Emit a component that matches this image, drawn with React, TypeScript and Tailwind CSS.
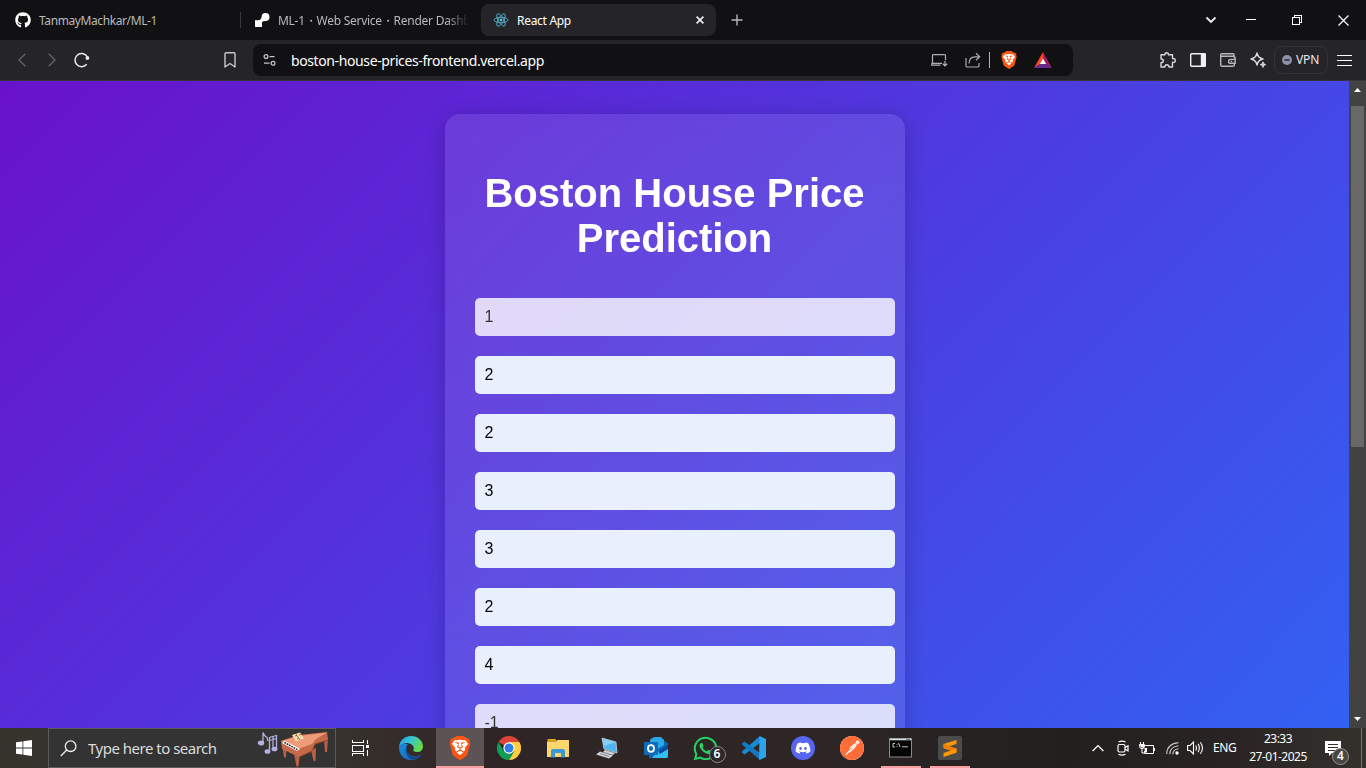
import React from "react";
import { FaGithub, FaWhatsapp, FaDiscord } from "react-icons/fa";
import { SiBrave, SiPostman } from "react-icons/si";

const ui = "font-['Noto_Sans','Open_Sans',sans-serif]";

function ReactMark() {
  return (
    <svg width="16" height="16" viewBox="-12 -12 24 24" fill="none" stroke="#61dafb" strokeWidth="1.2" className="opacity-85">
      <circle r="2.1" fill="#61dafb" stroke="none" />
      <ellipse rx="10.5" ry="4.1" />
      <ellipse rx="10.5" ry="4.1" transform="rotate(60)" />
      <ellipse rx="10.5" ry="4.1" transform="rotate(120)" />
    </svg>
  );
}

function BraveMark({ size }: { size: number }) {
  return (
    <svg width={size} height={size} viewBox="0 0 24 24">
      <path d="M4 4 L7 1.5 H17 L20 4 L21 7 L18.7 17 L12 22.5 L5.3 17 L3 7Z" fill="#fff" />
      <SiBrave size={24} color="#fb5413" />
    </svg>
  );
}

function TabStrip() {
  return (
    <div className="flex h-10 shrink-0 items-center bg-[#111113] text-[12px] text-[#b9b9bb]">
      <div className="ml-[15px] flex w-[225px] items-center">
        <FaGithub size={16} color="#fff" />
        <span className="ml-2 pt-px whitespace-nowrap tracking-[-0.4px]">TanmayMachkar/ML-1</span>
      </div>
      <div className="h-4 w-px bg-[#3a3a3d]" />
      <div className="ml-[14px] flex w-[214px] items-center">
        <svg width="15" height="14" viewBox="0 0 15 14" fill="#fff">
          <path d="M0 7.2 H3 Q6.3 7 6.6 4 A4 4 0 1 1 10.6 8 Q8 8 7 9 V14 H0Z" />
        </svg>
        <span className="ml-2 w-[192px] overflow-hidden pt-px whitespace-nowrap tracking-[-0.26px] [mask-image:linear-gradient(90deg,#000_88%,transparent)]">
          ML-1・Web Service・Render Dashb
        </span>
      </div>
      <div className="ml-3 flex h-8 w-[235px] items-center rounded-lg bg-[#252529] text-white">
        <span className="ml-3"><ReactMark /></span>
        <span className="ml-2 flex-1 pt-px tracking-[-0.3px]">React App</span>
        <svg width="8" height="8" viewBox="0 0 8 8" className="mr-3" stroke="#eee" strokeWidth="1.7"><path d="M.6.6 7.4 7.4M7.4.6.6 7.4" /></svg>
      </div>
      <svg width="12" height="12" viewBox="0 0 12 12" className="ml-[15px]" stroke="#b8b8ba" strokeWidth="1.4"><path d="M6 .5V11.5M.5 6H11.5" /></svg>
      <div className="flex-1" />
      <svg width="12" height="8" viewBox="0 0 12 8" fill="none" stroke="#eee" strokeWidth="1.9"><path d="M1.5 1.5 6 6 10.5 1.5" /></svg>
      <svg width="10" height="10" viewBox="0 0 10 10" className="ml-[29px]" stroke="#fff" shapeRendering="crispEdges"><path d="M0 4.5H10" /></svg>
      <svg width="10" height="10" viewBox="0 0 10 10" className="ml-[36px]" fill="none" stroke="#fff" shapeRendering="crispEdges"><path d="M.5 2.5H7.5V9.5H.5ZM2.5 2.5V.5H9.5V7.5H7.5" /></svg>
      <svg width="11" height="11" viewBox="0 0 11 11" className="mr-[17px] ml-[36px]" stroke="#fff" strokeWidth="1.2"><path d="M.5.5 10.5 10.5M10.5.5.5 10.5" /></svg>
    </div>
  );
}

function Toolbar() {
  return (
    <div className="flex h-[41px] shrink-0 items-center border-b border-[#35353b] bg-[#252529]">
      <svg width="8" height="14" viewBox="0 0 8 14" className="ml-[18px]" fill="none" stroke="#66666a" strokeWidth="1.3"><path d="M7.3.7 1 7 7.3 13.3" /></svg>
      <svg width="8" height="14" viewBox="0 0 8 14" className="ml-[22px]" fill="none" stroke="#66666a" strokeWidth="1.3"><path d="M.7.7 7 7 .7 13.3" /></svg>
      <svg width="16" height="16" viewBox="0 0 16 16" className="ml-[18px]" fill="none" stroke="#e8e8ea" strokeWidth="1.5"><path d="M13.6 5.2A6.6 6.6 0 1 0 12.7 12.3" /><circle cx="13.4" cy="6" r="1.9" fill="#e8e8ea" stroke="none" /></svg>
      <svg width="12" height="16" viewBox="0 0 12 16" className="ml-[134px]" fill="none" stroke="#c6c6ca" strokeWidth="1.4" strokeLinejoin="round"><path d="M1 1.7Q1 .8 2 .8H10Q11 .8 11 1.7V15L6 11.5 1 15Z" /></svg>

      <div className="ml-[17px] flex h-8 w-[820px] items-center rounded-lg bg-[#111113]">
        <svg width="13" height="12" viewBox="0 0 13 12" className="ml-[10px]" fill="none" stroke="#c3c3c6" strokeWidth="1.3"><circle cx="3" cy="2.6" r="1.9" /><path d="M6.5 2.6H11.5M1 9.2H6.5" /><circle cx="10" cy="9.2" r="1.9" /></svg>
        <span className="ml-[15px] flex-1 text-[14px] tracking-[-0.39px] text-white">boston-house-prices-frontend.vercel.app</span>
        <svg width="17" height="13" viewBox="0 0 17 13" fill="none" stroke="#b0b0b4" strokeWidth="1.2"><path d="M14.5 6V1.5Q14.5.7 13.7.7H2.3Q1.5.7 1.5 1.5V9M.5 9.3H11M.7 9.5V11.2H9.5M14 6.7V11.7M11.8 9.7 14 11.8 16.2 9.7" /></svg>
        <svg width="16" height="16" viewBox="0 0 16 16" className="ml-[17px]" fill="none" stroke="#a9a9ad" strokeWidth="1.2"><path d="M1 6V13.7Q1 15 2.3 15H12.7Q14 15 14 13.7V11M4 11.5Q4.2 4.8 10 4.8H14.5M11 1.2 14.7 4.8 11 8.3" /></svg>
        <div className="ml-[8px] h-4 w-px bg-[#b5b5b7]" />
        <span className="ml-[10px]"><BraveMark size={18} /></span>
        <svg width="18" height="16" viewBox="0 0 18 16" className="mr-[21px] ml-[16px]"><path d="M9 0 0 16 6 12 9 6.5Z" fill="#ff4724" /><path d="M9 0 18 16 12 12 9 6.5Z" fill="#9e1f63" /><path d="M0 16H18L12 12H6Z" fill="#662d91" /><path d="M9 6.5 12.2 12H5.8Z" fill="#fff" /></svg>
      </div>
      <div className="flex-1" />
      <svg width="16" height="16" viewBox="0 0 16 16" fill="none" stroke="#d9d9dc" strokeWidth="1.4" strokeLinejoin="round"><path d="M1 2.7H5Q4.8.7 6.6.7 8.5.7 8.4 2.7H12.5V6.5Q15.3 6.3 15.3 8.5 15.3 10.7 12.5 10.3V15H9Q8.8 12.8 6.8 12.8 5 12.8 4.8 15H1V10.7Q3.4 10.6 3.4 8.8 3.4 7.2 1 7Z" /></svg>
      <svg width="16" height="14" viewBox="0 0 16 14" className="ml-[14px]" fill="none" stroke="#f0f0f2" strokeWidth="1.4"><rect x=".7" y=".7" width="14.6" height="12.6" rx="1" /><path d="M11.5 1H15V13H11.5Z" fill="#f0f0f2" /></svg>
      <svg width="16" height="14" viewBox="0 0 16 14" className="ml-[14px]" fill="none" stroke="#b7b7bb" strokeWidth="1.4"><path d="M14 3.7V1.6Q14 .7 13 .7H2Q.7.7.7 2V11.5Q.7 13.3 2.5 13.3H13Q14.3 13.3 14.3 12V11M.7 3.3H13Q15.2 3.3 15.2 5.5V10.3H10.5Q8.6 10.3 8.6 8.4 8.6 6.4 10.5 6.4H15" /><path d="M10.7 8.4H12.2" /></svg>
      <svg width="16" height="16" viewBox="0 0 16 16" className="ml-[14px]" fill="none" stroke="#d9d9dc" strokeWidth="1.4" strokeLinejoin="round"><path d="M7 1Q8 6 13 7 8 8 7 13 6 8 1 7 6 6 7 1Z" /><path d="M13 9.8Q13.2 12.4 15.8 12.6 13.2 12.8 13 15.5 12.8 12.8 10.2 12.6 12.8 12.4 13 9.8Z" fill="#d9d9dc" strokeWidth=".9" /></svg>
      <div className="ml-2 flex h-[28px] w-[54px] items-center rounded-lg border border-[#323238] text-[12px] text-[#e8e8ea]">
        <svg width="10" height="10" viewBox="0 0 10 10" className="ml-[7px]"><circle cx="5" cy="5" r="5" fill="#8f90aa" /><path d="M2.4 5H7.6" stroke="#252529" strokeWidth="1.4" /></svg>
        <span className="ml-1 tracking-[-0.15px]">VPN</span>
      </div>
      <svg width="15" height="12" viewBox="0 0 15 12" className="mr-[14px] ml-[9px]" stroke="#fff" strokeWidth="1" shapeRendering="crispEdges"><path d="M0 1.5H15M0 6.5H15M0 11.5H15" /></svg>
    </div>
  );
}

const fields = [
  { value: "1", filled: false },
  { value: "2", filled: true },
  { value: "2", filled: true },
  { value: "3", filled: true },
  { value: "3", filled: true },
  { value: "2", filled: true },
  { value: "4", filled: true },
  { value: "-1", filled: false },
];

function Page() {
  return (
    <div className="flex min-h-0 flex-1">
      <main className="flex h-full flex-1 items-start justify-center overflow-hidden bg-[linear-gradient(135deg,#6a11cb_0%,#2575fc_100%)] bg-[length:1349px_1163px] bg-[position:0_-17px] pt-[33px] font-['Liberation_Sans',Arial,sans-serif]">
        <section className="h-[1063px] w-[460px] shrink-0 rounded-[15px] bg-white/10 p-[30px] shadow-[0_4px_20px_rgba(0,0,0,0.2)] backdrop-blur-[10px]">
          <h1 className="mt-[27px] mb-[37px] text-center text-[40px] leading-[45px] font-bold text-white">Boston House Price Prediction</h1>
          <div className="flex w-[420px] flex-col gap-5">
            {fields.map((f, i) => (
              <div key={i} className={f.filled ? "flex h-[38px] items-center rounded-[5px] bg-[#e8f0fe] px-[10px] text-[16px] text-black" : "flex h-[38px] items-center rounded-[5px] bg-white/80 px-[10px] text-[16px] text-[#333]"}>
                {f.value}
              </div>
            ))}
          </div>
        </section>
      </main>
      <div className="flex w-[17px] flex-col items-center bg-[#424242]">
        <svg width="7" height="4" viewBox="0 0 7 4" className="mt-[7px]" fill="#fff"><path d="M3.5 0 7 4H0Z" /></svg>
        <div className="mt-[14px] h-[341px] w-[13px] bg-[#686868]" />
        <div className="flex-1" />
        <svg width="7" height="4" viewBox="0 0 7 4" className="mb-[7px]" fill="#fff"><path d="M3.5 4 7 0H0Z" /></svg>
      </div>
    </div>
  );
}

function Piano() {
  return (
    <svg width="74" height="38" viewBox="0 0 74 38">
      <g fill="#b5b0de" stroke="#b5b0de" strokeWidth="1.3">
        <ellipse cx="5" cy="14" rx="2.6" ry="1.9" /><path d="M7 14V3.5Q8 7 11 8.5L12 12" fill="none" />
        <ellipse cx="11.5" cy="22.5" rx="2.3" ry="1.7" /><ellipse cx="18.5" cy="20" rx="2.3" ry="1.7" />
        <path d="M13.5 22V8.5L20.5 6.5V20M13.5 11.5 20.5 9.5M17 8V18" fill="none" />
      </g>
      <path d="M38 25 40.5 37.5 42.5 37.5 44 25ZM55 21 57.5 32 59.5 32 60 19ZM68 10 69 23 71 23 72 9ZM26 14 28 28.5 30 28.5 30.5 18Z" fill="#b86243" />
      <path d="M25 12 42 6 71 3 72 11 59 15 56 22 43 28 26 20Z" fill="#c56a49" />
      <path d="M25 12 43 7 71 3.5 60 10 56 15 42 20Z" fill="#ec9c78" />
      <path d="M26 14 41 22 44 20 29 12Z" fill="#fff" /><path d="m28.500 13.5 13.500 7.500" stroke="#2b2b2b" strokeWidth="1.5" strokeDasharray="1.8 .8" />
      <path d="M36 6 44 3.500 48 9.500 40 12.500Z" fill="#f6dcae" /><path d="m40 5 4 6M39 7l2-.5M43 6l2-.5M41 10l1.500-.5" stroke="#7c5639" strokeWidth=".8" />
      <path d="M43 28 56 22 59 15 72 11" fill="none" stroke="#93492f" />
    </svg>
  );
}

const Edge = () => (
  <svg width="24" height="24" viewBox="0 0 24 24">
    <defs>
      <linearGradient id="ea" x1="0" y1="0" x2="1" y2=".4"><stop stopColor="#1b9de2" /><stop offset=".5" stopColor="#36c2d7" /><stop offset="1" stopColor="#64dc4a" /></linearGradient>
      <linearGradient id="eb" x1="0" y1="0" x2=".6" y2="1"><stop stopColor="#1a8bd8" /><stop offset="1" stopColor="#1670c4" /></linearGradient>
    </defs>
    <path d="M0 12C0 5 5 0 12 0 19 0 24 5 24 10.5 24 14 21.5 16 18.5 16 15.5 16 14 15 14.3 14 15.5 13 15 8 9.5 7.2 4 6.5.5 9.5 0 12Z" fill="url(#ea)" />
    <path d="M0 12C.8 8 5 6.5 9 8 5.5 11 7 20 15.5 20.4 19 20.5 22 18.5 22.3 18.4 20 22 16 24 12 24 5 24 0 18.5 0 12Z" fill="url(#eb)" />
    <path d="M9 8.5C6 12 8 20 15.5 20.4 18 20.5 20 19.5 22.3 18.4 20 22 16 24 13.5 23.8 7 22.5 4.5 13 9 8.5Z" fill="#114a8b" />
  </svg>
);

const Chrome = () => (
  <svg width="24" height="24" viewBox="0 0 24 24">
    <path d="M12 12 1.6 6A12 12 0 0 1 22.4 6Z" fill="#db4437" />
    <path d="M12 6H22.4A12 12 0 0 1 12 24L17.2 15Z" fill="#ffcd40" />
    <path d="M12 12 17.2 15 12 24A12 12 0 0 1 1.6 6L6.8 15Z" fill="#0f9d58" />
    <circle cx="12" cy="12" r="5.7" fill="#fff" /><circle cx="12" cy="12" r="4.5" fill="#2f7de9" />
  </svg>
);

const Folder = () => (
  <svg width="22" height="19" viewBox="0 0 22 19">
    <path d="M.5 0H8.5L10 2.5H.5Z" fill="#dba50f" /><path d="M0 2.5H9L10.5 1H22V18H0Z" fill="#ffd66b" />
    <path d="M4 18.5V12Q4 10 6 10H16Q18 10 18 12V18.5H14V14H8V18.5Z" fill="#3997d3" />
  </svg>
);

const Laptop = () => (
  <svg width="24" height="23" viewBox="0 0 24 23">
    <path d="M7 1 21 5 22 16 9 12Z" fill="#4fb5f2" stroke="#c8ced1" strokeWidth=".8" /><path d="M7.500 1.500 20.500 5.200 9 9Z" fill="#86d0fb" />
    <path d="M10 13 20 16 18 18 8 15ZM5 14.500 18 18.500 14 21.500 1 17.500Z" fill="#cfd2d6" /><path d="M5 16.500 14 19.500" stroke="#8a8f96" />
  </svg>
);

const Outlook = () => (
  <svg width="24" height="24" viewBox="0 0 24 24">
    <path d="M5 7 14 1 24 7V22H5Z" fill="#1066b5" /><path d="M6 4Q8 1 12 1H17L20 4V9L12 14H6Z" fill="#28a8ea" /><path d="M14 15 24 8V20Q24 22 22 22H8Z" fill="#32bff3" /><path d="M14 15 24 8V13L16 18Z" fill="#0a4a9e" />
    <rect y="6" width="14" height="13" rx="1" fill="#0f6cbd" /><ellipse cx="7" cy="12.500" rx="3" ry="3.300" fill="none" stroke="#fff" strokeWidth="1.800" />
  </svg>
);

const VSCode = () => (
  <svg width="24" height="24" viewBox="0 0 24 24">
    <path d="M18 0V7L2.500 18.500 0 16.500V15.500Z" fill="#1a8bd3" /><path d="M18 24V17L2.500 5.500 0 7.500V8.500Z" fill="#1478bd" /><path d="M17.500 0 24 3V21L17.500 24 17 23Z" fill="#2ba4ec" />
  </svg>
);

const WhatsApp = () => (
  <div className="relative">
    <FaWhatsapp size={27} color="#25d366" />
    <span className="absolute top-[11px] left-[17px] flex size-[17px] items-center justify-center rounded-full border border-[#8b8988] bg-[#2c2929] text-[12px] leading-none font-semibold text-white">6</span>
  </div>
);

const Terminal = () => (
  <svg width="23" height="20" viewBox="0 0 23 20" className="-ml-px">
    <rect x=".5" y=".5" width="22" height="18.5" fill="#050505" stroke="#8a8a8a" /><path d="M1 1.500H22" stroke="#d7dce0" strokeWidth="1.600" /><path d="M17 1.500H21" stroke="#77818a" strokeWidth="1" />
    <path d="M6 5.500H4V9H6M8 6v.8M8 8.200V9M9.500 5 11 9M13 8.800H19" fill="none" stroke="#ddd" strokeWidth=".9" />
  </svg>
);

const Sublime = () => (
  <div className="flex size-6 items-center justify-center rounded-[2px] bg-[#4b4b4b]">
    <svg width="14" height="17" viewBox="0 0 14 17" fill="#ff9800"><path d="M.5 4 13.500 0V4L.5 8Z" /><path d="M.5 4 13.500 8.500V12.500L.5 8.500Z" fill="#ed7d00" /><path d="M.5 13 13.500 8.500V12.800L.5 17Z" /></svg>
  </div>
);

const apps = [
  { icon: <Edge />, active: false, open: false },
  { icon: <BraveMark size={24} />, active: true, open: false },
  { icon: <Chrome />, active: false, open: false },
  { icon: <Folder />, active: false, open: false },
  { icon: <Laptop />, active: false, open: false },
  { icon: <Outlook />, active: false, open: false },
  { icon: <WhatsApp />, active: false, open: false },
  { icon: <VSCode />, active: false, open: false },
  { icon: <div className="flex size-6 items-center justify-center rounded-full bg-[#5865f2]"><FaDiscord size={16} color="#fff" /></div>, active: false, open: false },
  { icon: <span className="rounded-full bg-white"><SiPostman size={24} color="#ff6c37" /></span>, active: false, open: false },
  { icon: <Terminal />, active: false, open: true },
  { icon: <Sublime />, active: false, open: true },
];

function Taskbar() {
  return (
    <div className="flex h-10 shrink-0 items-center bg-[linear-gradient(90deg,#36332d_0%,#37322d_25%,#302526_34%,#2d2625_60%,#221f1f_78%,#292423_90%,#34312d_100%)] text-white">
      <svg width="16" height="16" viewBox="0 0 16 16" className="mx-4" fill="#fff"><path d="M0 2.300 6.500 1.400V7.600H0ZM7.300 1.300 16 0V7.600H7.300ZM0 8.400H6.500V14.600L0 13.700ZM7.300 8.400H16V16L7.300 14.700Z" /></svg>
      <div className="flex h-10 w-[288px] items-center border border-[#5c5b59] bg-[#333333]">
        <svg width="17" height="17" viewBox="0 0 17 17" className="ml-[11px]" fill="none" stroke="#eee" strokeWidth="1.300"><circle cx="10.600" cy="6.200" r="5.300" /><path d="M6.800 10 .8 16" /></svg>
        <span className="ml-[11px] flex-1 text-[15px] tracking-[-0.5px] whitespace-nowrap text-[#dcdcdc]">Type here to search</span>
        <span className="mr-[5px]"><Piano /></span>
      </div>
      <svg width="17" height="16" viewBox="0 0 17 16" className="ml-[16px]" fill="none" stroke="#fff" strokeWidth="1" shapeRendering="crispEdges"><path d="M.5 0V2.500H11.500V0M.5 5.500H11.500V11.500H.5ZM.5 16V13.500H11.500V16M15.500 0V4M15.500 10V16" /><path d="M14 5H17V8H14Z" fill="#fff" stroke="none" /></svg>
      <div className="ml-[18px] flex gap-px">
        {apps.map((a, i) => (
          <div key={i} className={a.active ? "flex h-10 w-12 flex-col items-center bg-[#5c5354]" : "flex h-10 w-12 flex-col items-center"}>
            <div className="flex h-[38px] items-center pt-[2px]">{a.icon}</div>
            <div className={a.active ? "h-[2px] w-12 bg-[#fb9ea2]" : a.open ? "h-[2px] w-10 bg-[#fb9ea2]" : "h-[2px]"} />
          </div>
        ))}
      </div>
      <div className="flex-1" />
      <svg width="12" height="8" viewBox="0 0 12 8" fill="none" stroke="#fff" strokeWidth="1.300"><path d="M.6 7 6 1.600 11.400 7" /></svg>
      <svg width="12" height="16" viewBox="0 0 12 16" className="ml-[13px]" fill="none" stroke="#fff" strokeWidth="1.200"><rect x="1" y="4.500" width="7" height="7.500" rx="1.500" /><path d="M8 7.500 11 5.700V11L8 9M1.500 2Q5 .2 8.500 2M1.500 14.300Q5 16 8.500 14.300" /></svg>
      <svg width="17" height="13" viewBox="0 0 17 13" className="ml-[10px]" fill="none" stroke="#fff"><path d="M6 3.500H14.500V11.500H5.500V9M15.500 6V9" /><path d="M1.500 0V2.500M4.500 0V2.500M.5 2.500H5.500V4.500Q5.500 6.500 3 6.500.5 6.500.5 4.500ZM3 6.500V11H5" /><path d="M1 3H5V5.500H2ZM5.500 6H8V10.500H6Z" fill="#fff" stroke="none" /></svg>
      <svg width="13" height="13" viewBox="0 0 13 13" className="ml-[10px]" fill="none" stroke="#d0d0d0" strokeWidth="1.100"><path d="M.7 12Q1 1.500 12.500.7M3.700 12.200Q4 4.500 12.500 3.700M6.700 12.400Q7 7.400 12.500 6.700" /><circle cx="11" cy="11" r="1.700" fill="#fff" stroke="none" /></svg>
      <svg width="17" height="14" viewBox="0 0 17 14" className="ml-[8px]" fill="none" stroke="#fff" strokeWidth="1.100"><path d="M.6 4.500H3L6.500 1V13L3 9.500H.6ZM8.700 4.500Q10.200 7 8.700 9.500M11 2.800Q13.700 7 11 11.200M13.400 1.200Q17.500 7 13.400 12.800" /></svg>
      <span className="ml-[9px] w-6 text-[12px] tracking-[-0.4px]">ENG</span>
      <div className="ml-[9px] flex w-[64px] flex-col items-center text-[12px] leading-[18px] tracking-[-0.5px] whitespace-nowrap"><span>23:33</span><span>27-01-2025</span></div>
      <div className="relative ml-[15px] h-[15px] w-4">
        <svg width="16" height="16" viewBox="0 0 16 16"><path d="M0 0H16V12H7L4 15V12H0Z" fill="#fff" /><path d="M3 3.500H13M3 6.500H13M3 9.500H10" stroke="#33302d" strokeWidth="1" shapeRendering="crispEdges" /></svg>
        <span className="absolute top-[7px] left-[7px] flex size-[17px] items-center justify-center rounded-full border border-[#969492] bg-[#484643] text-[12px] leading-none font-semibold">4</span>
      </div>
      <div className="ml-5 h-10 w-px bg-[#77746f]" />
      <div className="w-1" />
    </div>
  );
}

export default function App() {
  return (
    <div className={`flex h-[768px] w-[1366px] flex-col overflow-hidden ${ui}`}>
      <TabStrip />
      <Toolbar />
      <Page />
      <Taskbar />
    </div>
  );
}
